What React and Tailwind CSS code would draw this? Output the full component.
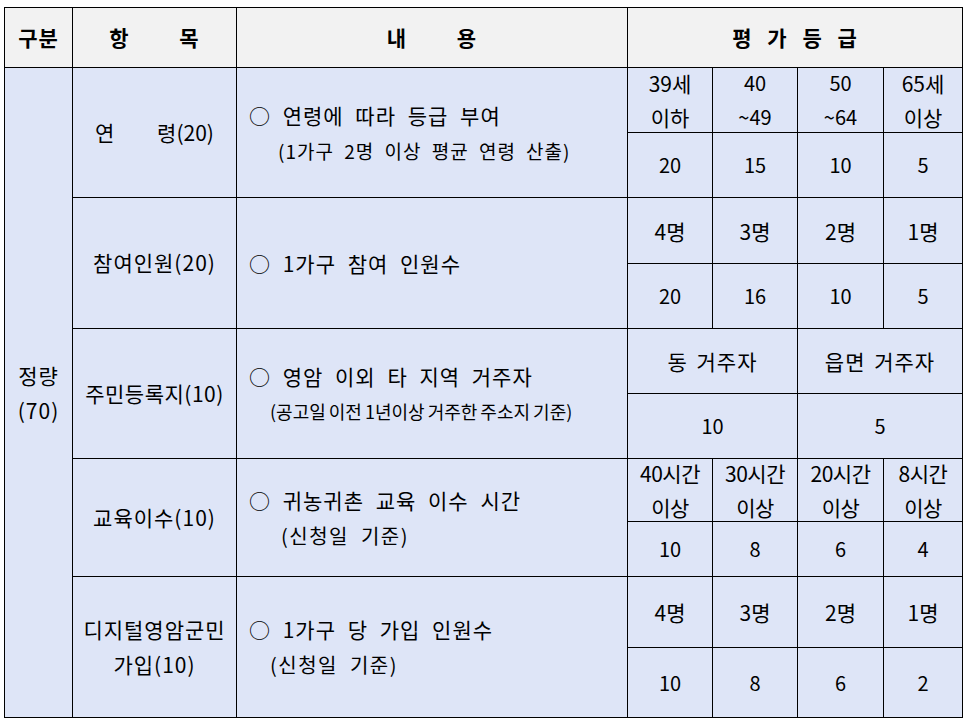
import React from "react";

const cell = "border border-black align-middle p-0";
const g = `${cell} text-center text-[20px] leading-[34px]`;
const h = `${cell} text-center text-[21px] leading-[34px]`;

function Two({ a, b, extra = "" }) {
  return (
    <div className={`-my-[4px] leading-[34px] ${extra}`}>
      <div>{a}</div>
      <div>{b}</div>
    </div>
  );
}

function Content({ main, sub, subClass = "" }) {
  return (
    <div className="-my-[4px] pl-[12px] text-left">
      <div className="text-[21px] leading-[35px] tracking-[1px] [word-spacing:6px] whitespace-nowrap">{main}</div>
      {sub && (
        <div className={`leading-[35px] whitespace-nowrap ${subClass}`}>{sub}</div>
      )}
    </div>
  );
}

export default function App() {
  return (
    <div className="pt-[7px] pl-[4px] bg-white min-h-[722px] font-['Noto_Sans_CJK_KR','Noto_Sans',sans-serif] text-black">
      <table className="table-fixed border-collapse w-[959px]">
        <colgroup>
          <col className="w-[68px]" />
          <col className="w-[164px]" />
          <col className="w-[391px]" />
          <col className="w-[85px]" />
          <col className="w-[85px]" />
          <col className="w-[86px]" />
          <col className="w-[79px]" />
        </colgroup>
        <tbody>
          <tr className="h-[60px] bg-[#f2f2f2]">
            <th className={`${cell} text-[21px] font-bold tracking-[1px]`}>구분</th>
            <th className={`${cell} text-[21px] font-bold tracking-[1px] [word-spacing:44px]`}>항 목</th>
            <th className={`${cell} text-[21px] font-bold tracking-[1px] [word-spacing:44px]`}>내 용</th>
            <th colSpan={4} className={`${cell} text-[21px] font-bold tracking-[1px] [word-spacing:9px]`}>평 가 등 급</th>
          </tr>

          <tr className="h-[65px] bg-[#dee5f7]">
            <td rowSpan={10} className={`${cell} text-center text-[21px] leading-[35px] tracking-[1px]`}>
              정량
              <br />
              (70)
            </td>
            <td rowSpan={2} className={`${cell} text-center text-[21px] [word-spacing:38px]`}>연 령(20)</td>
            <td rowSpan={2} className={cell}>
              <Content main="○ 연령에 따라 등급 부여" sub="(1가구 2명 이상 평균 연령 산출)" subClass="pl-[29px] text-[19px] tracking-[1px] [word-spacing:5px]" />
            </td>
            <td className={h}><Two a="39세" b="이하" /></td>
            <td className={g}><Two a="40" b="~49" /></td>
            <td className={g}><Two a="50" b="~64" /></td>
            <td className={h}><Two a="65세" b="이상" /></td>
          </tr>
          <tr className="h-[65px] bg-[#dee5f7]">
            <td className={g}>20</td>
            <td className={g}>15</td>
            <td className={g}>10</td>
            <td className={g}>5</td>
          </tr>

          <tr className="h-[66px] bg-[#dee5f7]">
            <td rowSpan={2} className={`${cell} text-center text-[21px] tracking-[1px]`}>참여인원(20)</td>
            <td rowSpan={2} className={cell}>
              <Content main="○ 1가구 참여 인원수" />
            </td>
            <td className={h}>4명</td>
            <td className={h}>3명</td>
            <td className={h}>2명</td>
            <td className={h}>1명</td>
          </tr>
          <tr className="h-[65px] bg-[#dee5f7]">
            <td className={g}>20</td>
            <td className={g}>16</td>
            <td className={g}>10</td>
            <td className={g}>5</td>
          </tr>

          <tr className="h-[65px] bg-[#dee5f7]">
            <td rowSpan={2} className={`${cell} text-center text-[21px] tracking-[0.5px]`}>주민등록지(10)</td>
            <td rowSpan={2} className={cell}>
              <Content main="○ 영암 이외 타 지역 거주자" sub="(공고일 이전 1년이상 거주한 주소지 기준)" subClass="pl-[21px] text-[18px] tracking-[0px] [word-spacing:-1px]" />
            </td>
            <td colSpan={2} className={`${h} tracking-[1px] [word-spacing:3px]`}>동 거주자</td>
            <td colSpan={2} className={`${h} tracking-[1px] [word-spacing:3px]`}>읍면 거주자</td>
          </tr>
          <tr className="h-[65px] bg-[#dee5f7]">
            <td colSpan={2} className={g}>10</td>
            <td colSpan={2} className={g}>5</td>
          </tr>

          <tr className="h-[63px] bg-[#dee5f7]">
            <td rowSpan={2} className={`${cell} text-center text-[21px] tracking-[1px]`}>교육이수(10)</td>
            <td rowSpan={2} className={cell}>
              <Content main="○ 귀농귀촌 교육 이수 시간" sub="(신청일 기준)" subClass="pl-[32px] text-[20px] tracking-[1.5px] [word-spacing:6px]" />
            </td>
            <td className={h}><Two a="40시간" b="이상" extra="tracking-[-0.5px]" /></td>
            <td className={h}><Two a="30시간" b="이상" extra="tracking-[-0.5px]" /></td>
            <td className={h}><Two a="20시간" b="이상" extra="tracking-[-0.5px]" /></td>
            <td className={h}><Two a="8시간" b="이상" extra="tracking-[-0.5px]" /></td>
          </tr>
          <tr className="h-[55px] bg-[#dee5f7]">
            <td className={g}>10</td>
            <td className={g}>8</td>
            <td className={g}>6</td>
            <td className={g}>4</td>
          </tr>

          <tr className="h-[71px] bg-[#dee5f7]">
            <td rowSpan={2} className={`${cell} text-center text-[21px] leading-[35px] tracking-[1px]`}>
              디지털영암군민
              <br />
              가입(10)
            </td>
            <td rowSpan={2} className={cell}>
              <Content main="○ 1가구 당 가입 인원수" sub="(신청일 기준)" subClass="pl-[21px] text-[20px] tracking-[1.5px] [word-spacing:6px]" />
            </td>
            <td className={h}>4명</td>
            <td className={h}>3명</td>
            <td className={h}>2명</td>
            <td className={h}>1명</td>
          </tr>
          <tr className="h-[70px] bg-[#dee5f7]">
            <td className={g}>10</td>
            <td className={g}>8</td>
            <td className={g}>6</td>
            <td className={g}>2</td>
          </tr>
        </tbody>
      </table>
    </div>
  );
}
